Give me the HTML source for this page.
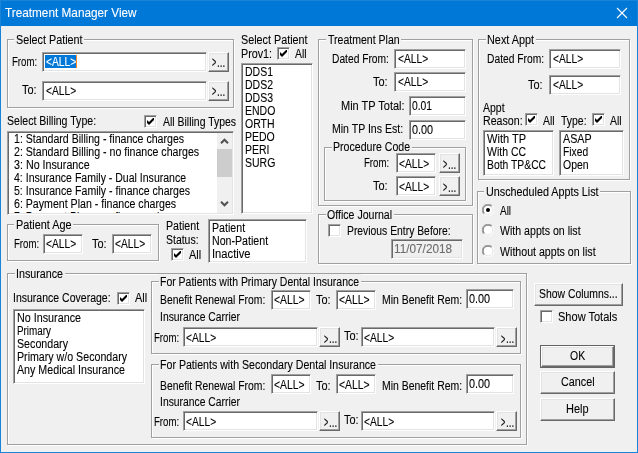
<!DOCTYPE html><html><head><meta charset="utf-8"><title>Treatment Manager View</title><style>
html,body{margin:0;padding:0;background:#f0f0f0;}
body{width:638px;height:453px;position:relative;overflow:hidden;background:#f0f0f0;font-family:"Liberation Sans",sans-serif;font-size:12.5px;color:#000;}
body>*{position:absolute;box-sizing:content-box;}
.tb{left:0;top:0;width:638px;height:26px;background:#0078d7;}
.wb{background:#1a84d8;}
.g{border:1px solid #a0a0a0;box-shadow:1px 1px 0 #fff,inset 1px 1px 0 #fff;}
.bg{background:#f0f0f0;}
.e{background:#fff;border:1px solid;border-color:#a0a0a0 #fff #fff #a0a0a0;box-shadow:inset 1px 1px 0 #696969,inset -1px -1px 0 #e3e3e3;}
.ed{background:#f0f0f0;border:1px solid;border-color:#a0a0a0 #fff #fff #a0a0a0;box-shadow:inset 1px 1px 0 #696969,inset -1px -1px 0 #e3e3e3;}
.b{background:#f0f0f0;border:1px solid;border-color:#fff #696969 #696969 #fff;box-shadow:inset -1px -1px 0 #a0a0a0,inset 1px 1px 0 #e3e3e3;}
.bd{background:#646464;}
.tx{left:0;top:0;width:638px;height:453px;will-change:transform;}
.tx>*{position:absolute;}
.t{-webkit-text-stroke:0.1px;white-space:pre;line-height:14px;height:14px;transform-origin:0 0;}
.sel{background:#0078d7;}
.sb{background:#f0f0f0;}
.th{background:#cdcdcd;}
</style></head><body>
<div class="tb"></div>
<div class="wb" style="left:0;top:0;width:1px;height:453px"></div>
<div class="wb" style="left:0;top:0;width:638px;height:1px"></div>
<div class="wb" style="left:637px;top:0;width:1px;height:453px"></div>
<div class="wb" style="left:0;top:452px;width:638px;height:1px"></div>
<svg class="a" style="left:616px;top:7px" width="12" height="12" viewBox="0 0 12 12"><path d="M1 1L11 11M11 1L1 11" stroke="#fff" stroke-width="1.1" fill="none"/></svg>
<div class="g" style="left:7px;top:39px;width:225px;height:67px"></div>
<div class="bg" style="left:14px;top:32px;width:70px;height:15px"></div>
<div class="e" style="left:42px;top:52px;width:163px;height:18px;"></div>
<div class="sel" style="left:45px;top:55px;width:31px;height:13px"></div>
<div style="left:76px;top:55px;width:1px;height:13px;background:#ff8728"></div>
<div class="b" style="left:208px;top:52px;width:19px;height:18px"></div>
<div class="e" style="left:42px;top:81px;width:163px;height:18px;"></div>
<div class="b" style="left:208px;top:81px;width:19px;height:18px"></div>
<div class="e" style="left:277px;top:47px;width:11px;height:11px;"></div>
<svg class="a" style="left:280px;top:50px" width="7" height="7" viewBox="0 0 7 7"><path d="M0 2v3l2 2l5-5v-3l-5 5z" fill="#000"/></svg>
<div class="e" style="left:241px;top:63px;width:70px;height:149px;"></div>
<div class="e" style="left:144px;top:114.5px;width:11px;height:11px;"></div>
<svg class="a" style="left:147px;top:117.5px" width="7" height="7" viewBox="0 0 7 7"><path d="M0 2v3l2 2l5-5v-3l-5 5z" fill="#000"/></svg>
<div class="e" style="left:7px;top:131px;width:225px;height:82px;"></div>
<div style="left:14px;top:211px;width:190px;height:2px;overflow:hidden"><span style="position:absolute;left:0;top:-1px;white-space:pre;line-height:14px;transform-origin:0 0;transform:scaleX(0.84)">7: Payment Plan - no finance charges</span></div>
<div class="sb" style="left:217px;top:133px;width:15px;height:80px"></div>
<div class="th" style="left:217px;top:149px;width:15px;height:28px"></div>
<svg class="a" style="left:220px;top:137px" width="9" height="8" viewBox="0 0 9 8"><path d="M1 6.2L4.5 2.7L8 6.2" stroke="#505050" stroke-width="2" fill="none"/></svg>
<svg class="a" style="left:220px;top:200px" width="9" height="8" viewBox="0 0 9 8"><path d="M1 1.8L4.5 5.3L8 1.8" stroke="#505050" stroke-width="2" fill="none"/></svg>
<div class="g" style="left:7px;top:224px;width:150px;height:35px"></div>
<div class="bg" style="left:14px;top:217px;width:59px;height:15px"></div>
<div class="e" style="left:43px;top:234px;width:38px;height:18px;"></div>
<div class="e" style="left:112px;top:234px;width:38px;height:18px;"></div>
<div class="e" style="left:171px;top:248px;width:11px;height:11px;"></div>
<svg class="a" style="left:174px;top:251px" width="7" height="7" viewBox="0 0 7 7"><path d="M0 2v3l2 2l5-5v-3l-5 5z" fill="#000"/></svg>
<div class="e" style="left:208px;top:219px;width:97px;height:42px;"></div>
<div class="g" style="left:318px;top:39px;width:153px;height:165px"></div>
<div class="bg" style="left:326px;top:32px;width:75px;height:15px"></div>
<div class="e" style="left:394px;top:49px;width:70px;height:18px;"></div>
<div class="e" style="left:394px;top:72px;width:70px;height:18px;"></div>
<div class="e" style="left:409px;top:96px;width:55px;height:18px;"></div>
<div class="e" style="left:409px;top:120px;width:55px;height:18px;"></div>
<div class="g" style="left:324px;top:147px;width:140px;height:52px"></div>
<div class="bg" style="left:331.5px;top:139.5px;width:80.5px;height:15.0px"></div>
<div class="e" style="left:396px;top:153px;width:38px;height:18px;"></div>
<div class="b" style="left:439px;top:153px;width:19px;height:18px"></div>
<div class="e" style="left:396px;top:176px;width:38px;height:18px;"></div>
<div class="b" style="left:439px;top:176px;width:19px;height:18px"></div>
<div class="g" style="left:318px;top:214px;width:153px;height:48px"></div>
<div class="bg" style="left:325.5px;top:207.5px;width:68.5px;height:15.0px"></div>
<div class="e" style="left:328px;top:224px;width:11px;height:11px;"></div>
<div class="ed" style="left:391px;top:239px;width:70px;height:18px;"></div>
<div class="g" style="left:478px;top:39px;width:150px;height:139px"></div>
<div class="bg" style="left:485.5px;top:32px;width:50.5px;height:15px"></div>
<div class="e" style="left:549px;top:49px;width:70px;height:18px;"></div>
<div class="e" style="left:549px;top:75px;width:70px;height:18px;"></div>
<div class="e" style="left:525px;top:113px;width:11px;height:11px;"></div>
<svg class="a" style="left:528px;top:116px" width="7" height="7" viewBox="0 0 7 7"><path d="M0 2v3l2 2l5-5v-3l-5 5z" fill="#000"/></svg>
<div class="e" style="left:592px;top:113px;width:11px;height:11px;"></div>
<svg class="a" style="left:595px;top:116px" width="7" height="7" viewBox="0 0 7 7"><path d="M0 2v3l2 2l5-5v-3l-5 5z" fill="#000"/></svg>
<div class="e" style="left:483px;top:130px;width:69px;height:44px;"></div>
<div class="e" style="left:559px;top:130px;width:63px;height:44px;"></div>
<div class="g" style="left:477px;top:191px;width:152px;height:71px"></div>
<div class="bg" style="left:484px;top:184.5px;width:116px;height:15.0px"></div>
<svg class="a" style="left:482px;top:204px" width="12" height="12" viewBox="0 0 12 12"><circle cx="6" cy="6" r="5.5" fill="#fff"/><path d="M10.2 1.8A5.9 5.9 0 0 0 1.8 10.2" fill="none" stroke="#a0a0a0" stroke-width="1"/><path d="M9.5 2.5A4.9 4.9 0 0 0 2.5 9.5" fill="none" stroke="#696969" stroke-width="1"/><path d="M10.2 1.8A5.9 5.9 0 0 1 1.8 10.2" fill="none" stroke="#fff" stroke-width="1"/><path d="M9.5 2.5A4.9 4.9 0 0 1 2.5 9.5" fill="none" stroke="#e3e3e3" stroke-width="1"/><circle cx="6" cy="6" r="2" fill="#000"/></svg>
<svg class="a" style="left:482px;top:224px" width="12" height="12" viewBox="0 0 12 12"><circle cx="6" cy="6" r="5.5" fill="#fff"/><path d="M10.2 1.8A5.9 5.9 0 0 0 1.8 10.2" fill="none" stroke="#a0a0a0" stroke-width="1"/><path d="M9.5 2.5A4.9 4.9 0 0 0 2.5 9.5" fill="none" stroke="#696969" stroke-width="1"/><path d="M10.2 1.8A5.9 5.9 0 0 1 1.8 10.2" fill="none" stroke="#fff" stroke-width="1"/><path d="M9.5 2.5A4.9 4.9 0 0 1 2.5 9.5" fill="none" stroke="#e3e3e3" stroke-width="1"/></svg>
<svg class="a" style="left:482px;top:245px" width="12" height="12" viewBox="0 0 12 12"><circle cx="6" cy="6" r="5.5" fill="#fff"/><path d="M10.2 1.8A5.9 5.9 0 0 0 1.8 10.2" fill="none" stroke="#a0a0a0" stroke-width="1"/><path d="M9.5 2.5A4.9 4.9 0 0 0 2.5 9.5" fill="none" stroke="#696969" stroke-width="1"/><path d="M10.2 1.8A5.9 5.9 0 0 1 1.8 10.2" fill="none" stroke="#fff" stroke-width="1"/><path d="M9.5 2.5A4.9 4.9 0 0 1 2.5 9.5" fill="none" stroke="#e3e3e3" stroke-width="1"/></svg>
<div class="g" style="left:7px;top:273px;width:518px;height:170px"></div>
<div class="bg" style="left:14.600000000000001px;top:266px;width:50.4px;height:15px"></div>
<div class="e" style="left:117px;top:292px;width:11px;height:11px;"></div>
<svg class="a" style="left:120px;top:295px" width="7" height="7" viewBox="0 0 7 7"><path d="M0 2v3l2 2l5-5v-3l-5 5z" fill="#000"/></svg>
<div class="e" style="left:13px;top:309px;width:130px;height:73px;"></div>
<div class="g" style="left:151px;top:281px;width:368px;height:71px"></div>
<div class="bg" style="left:158.8px;top:274px;width:202.40000000000003px;height:15px"></div>
<div class="e" style="left:271px;top:290px;width:38px;height:18px;"></div>
<div class="e" style="left:336px;top:290px;width:38px;height:18px;"></div>
<div class="e" style="left:466px;top:289px;width:46px;height:18px;"></div>
<div class="e" style="left:183px;top:327px;width:133px;height:18px;"></div>
<div class="b" style="left:319px;top:327px;width:19px;height:18px"></div>
<div class="e" style="left:361px;top:327px;width:132px;height:18px;"></div>
<div class="b" style="left:496px;top:327px;width:19px;height:18px"></div>
<div class="g" style="left:151px;top:364px;width:368px;height:72px"></div>
<div class="bg" style="left:158.8px;top:357px;width:219.40000000000003px;height:15px"></div>
<div class="e" style="left:271px;top:374px;width:38px;height:18px;"></div>
<div class="e" style="left:336px;top:374px;width:38px;height:18px;"></div>
<div class="e" style="left:466px;top:374px;width:46px;height:18px;"></div>
<div class="e" style="left:183px;top:411px;width:133px;height:18px;"></div>
<div class="b" style="left:319px;top:411px;width:19px;height:18px"></div>
<div class="e" style="left:361px;top:411px;width:132px;height:18px;"></div>
<div class="b" style="left:496px;top:411px;width:19px;height:18px"></div>
<div class="b" style="left:534px;top:283px;width:87px;height:21px"></div>
<div class="e" style="left:540px;top:310px;width:11px;height:11px;"></div>
<div class="bd" style="left:540px;top:345px;width:75px;height:23px"></div>
<div class="b" style="left:541px;top:346px;width:71px;height:19px"></div>
<div class="b" style="left:540px;top:371px;width:73px;height:21px"></div>
<div class="b" style="left:540px;top:398px;width:73px;height:21px"></div>
<div class="tx">
<span class="t" style="left:4.60px;top:5.50px;transform:scaleX(0.9061);font-size:13px;color:#fff;">Treatment Manager View</span>
<span class="t" style="left:15.60px;top:32.62px;transform:scaleX(0.8634);">Select Patient</span>
<span class="t" style="left:12.10px;top:54.62px;transform:scaleX(0.7690);">From:</span>
<span class="t" style="left:45.60px;top:54.62px;transform:scaleX(0.8170);color:#fff;">&lt;ALL&gt;</span>
<span class="t" style="left:212.10px;top:55.47px;transform:scaleX(0.5130);font-size:14px;">&gt;</span>
<span class="t" style="left:217.30px;top:55.72px;transform:scaleX(0.7868);">...</span>
<span class="t" style="left:21.60px;top:82.62px;transform:scaleX(0.8749);">To:</span>
<span class="t" style="left:45.60px;top:83.62px;transform:scaleX(0.8170);">&lt;ALL&gt;</span>
<span class="t" style="left:212.10px;top:84.47px;transform:scaleX(0.5130);font-size:14px;">&gt;</span>
<span class="t" style="left:217.30px;top:84.72px;transform:scaleX(0.7868);">...</span>
<span class="t" style="left:240.60px;top:32.62px;transform:scaleX(0.8634);">Select Patient</span>
<span class="t" style="left:240.60px;top:46.62px;transform:scaleX(0.8605);">Prov1:</span>
<span class="t" style="left:295.00px;top:46.62px;transform:scaleX(0.8342);">All</span>
<span class="t" style="left:244.60px;top:65.12px;transform:scaleX(0.8400);">DDS1</span>
<span class="t" style="left:244.60px;top:78.12px;transform:scaleX(0.8400);">DDS2</span>
<span class="t" style="left:244.60px;top:91.12px;transform:scaleX(0.8400);">DDS3</span>
<span class="t" style="left:244.60px;top:104.12px;transform:scaleX(0.8400);">ENDO</span>
<span class="t" style="left:244.60px;top:117.12px;transform:scaleX(0.8400);">ORTH</span>
<span class="t" style="left:244.60px;top:130.12px;transform:scaleX(0.8400);">PEDO</span>
<span class="t" style="left:244.60px;top:143.12px;transform:scaleX(0.8400);">PERI</span>
<span class="t" style="left:244.60px;top:156.12px;transform:scaleX(0.8400);">SURG</span>
<span class="t" style="left:7.10px;top:113.62px;transform:scaleX(0.8454);">Select Billing Type:</span>
<span class="t" style="left:162.60px;top:114.62px;transform:scaleX(0.8372);">All Billing Types</span>
<span class="t" style="left:14.10px;top:131.62px;transform:scaleX(0.8471);">1: Standard Billing - finance charges</span>
<span class="t" style="left:14.10px;top:144.62px;transform:scaleX(0.8483);">2: Standard Billing - no finance charges</span>
<span class="t" style="left:14.10px;top:157.62px;transform:scaleX(0.8567);">3: No Insurance</span>
<span class="t" style="left:14.10px;top:170.62px;transform:scaleX(0.8425);">4: Insurance Family - Dual Insurance</span>
<span class="t" style="left:14.10px;top:183.62px;transform:scaleX(0.8449);">5: Insurance Family - finance charges</span>
<span class="t" style="left:14.10px;top:196.62px;transform:scaleX(0.8483);">6: Payment Plan - finance charges</span>
<span class="t" style="left:15.60px;top:217.62px;transform:scaleX(0.8694);">Patient Age</span>
<span class="t" style="left:13.60px;top:236.62px;transform:scaleX(0.7690);">From:</span>
<span class="t" style="left:46.10px;top:236.62px;transform:scaleX(0.8170);">&lt;ALL&gt;</span>
<span class="t" style="left:91.60px;top:236.62px;transform:scaleX(0.8749);">To:</span>
<span class="t" style="left:115.10px;top:236.62px;transform:scaleX(0.8170);">&lt;ALL&gt;</span>
<span class="t" style="left:166.10px;top:219.12px;transform:scaleX(0.8504);">Patient</span>
<span class="t" style="left:166.10px;top:232.62px;transform:scaleX(0.8376);">Status:</span>
<span class="t" style="left:188.60px;top:247.62px;transform:scaleX(0.8701);">All</span>
<span class="t" style="left:212.10px;top:220.62px;transform:scaleX(0.8504);">Patient</span>
<span class="t" style="left:212.10px;top:233.62px;transform:scaleX(0.8498);">Non-Patient</span>
<span class="t" style="left:212.10px;top:246.62px;transform:scaleX(0.8957);">Inactive</span>
<span class="t" style="left:327.60px;top:32.62px;transform:scaleX(0.8424);">Treatment Plan</span>
<span class="t" style="left:332.30px;top:51.62px;transform:scaleX(0.8191);">Dated From:</span>
<span class="t" style="left:397.60px;top:51.62px;transform:scaleX(0.8170);">&lt;ALL&gt;</span>
<span class="t" style="left:372.60px;top:74.62px;transform:scaleX(0.8749);">To:</span>
<span class="t" style="left:397.60px;top:74.62px;transform:scaleX(0.8170);">&lt;ALL&gt;</span>
<span class="t" style="left:340.60px;top:98.62px;transform:scaleX(0.8801);">Min TP Total:</span>
<span class="t" style="left:412.10px;top:98.92px;transform:scaleX(0.8257);">0.01</span>
<span class="t" style="left:332.10px;top:121.62px;transform:scaleX(0.8434);">Min TP Ins Est:</span>
<span class="t" style="left:412.10px;top:122.62px;transform:scaleX(0.8668);">0.00</span>
<span class="t" style="left:333.10px;top:140.12px;transform:scaleX(0.8470);">Procedure Code</span>
<span class="t" style="left:364.10px;top:155.62px;transform:scaleX(0.7690);">From:</span>
<span class="t" style="left:399.10px;top:156.62px;transform:scaleX(0.8170);">&lt;ALL&gt;</span>
<span class="t" style="left:443.10px;top:157.47px;transform:scaleX(0.5130);font-size:14px;">&gt;</span>
<span class="t" style="left:448.30px;top:157.72px;transform:scaleX(0.7868);">...</span>
<span class="t" style="left:372.60px;top:178.62px;transform:scaleX(0.8749);">To:</span>
<span class="t" style="left:399.10px;top:179.62px;transform:scaleX(0.8170);">&lt;ALL&gt;</span>
<span class="t" style="left:443.10px;top:180.47px;transform:scaleX(0.5130);font-size:14px;">&gt;</span>
<span class="t" style="left:448.30px;top:180.72px;transform:scaleX(0.7868);">...</span>
<span class="t" style="left:327.10px;top:208.12px;transform:scaleX(0.8465);">Office Journal</span>
<span class="t" style="left:346.60px;top:223.62px;transform:scaleX(0.8284);">Previous Entry Before:</span>
<span class="t" style="left:394.10px;top:241.62px;transform:scaleX(0.9426);color:#6d6d6d;">11/07/2018</span>
<span class="t" style="left:487.10px;top:32.62px;transform:scaleX(0.8690);">Next Appt</span>
<span class="t" style="left:486.60px;top:51.62px;transform:scaleX(0.8220);">Dated From:</span>
<span class="t" style="left:552.60px;top:51.62px;transform:scaleX(0.8170);">&lt;ALL&gt;</span>
<span class="t" style="left:527.60px;top:77.62px;transform:scaleX(0.8749);">To:</span>
<span class="t" style="left:552.60px;top:77.62px;transform:scaleX(0.8170);">&lt;ALL&gt;</span>
<span class="t" style="left:482.60px;top:100.92px;transform:scaleX(0.8399);">Appt</span>
<span class="t" style="left:482.60px;top:113.62px;transform:scaleX(0.8505);">Reason:</span>
<span class="t" style="left:542.60px;top:113.62px;transform:scaleX(0.8342);">All</span>
<span class="t" style="left:561.10px;top:113.62px;transform:scaleX(0.8372);">Type:</span>
<span class="t" style="left:609.60px;top:113.62px;transform:scaleX(0.8342);">All</span>
<span class="t" style="left:486.60px;top:132.12px;transform:scaleX(0.8839);">With TP</span>
<span class="t" style="left:486.60px;top:145.12px;transform:scaleX(0.8403);">With CC</span>
<span class="t" style="left:486.60px;top:158.12px;transform:scaleX(0.8286);">Both TP&amp;CC</span>
<span class="t" style="left:563.40px;top:132.12px;transform:scaleX(0.8573);">ASAP</span>
<span class="t" style="left:563.40px;top:145.12px;transform:scaleX(0.8208);">Fixed</span>
<span class="t" style="left:563.40px;top:158.12px;transform:scaleX(0.8368);">Open</span>
<span class="t" style="left:485.60px;top:185.12px;transform:scaleX(0.8619);">Unscheduled Appts List</span>
<span class="t" style="left:499.60px;top:203.62px;transform:scaleX(0.7982);">All</span>
<span class="t" style="left:499.60px;top:223.62px;transform:scaleX(0.8467);">With appts on list</span>
<span class="t" style="left:499.60px;top:244.62px;transform:scaleX(0.8493);">Without appts on list</span>
<span class="t" style="left:16.20px;top:266.62px;transform:scaleX(0.8560);">Insurance</span>
<span class="t" style="left:13.10px;top:290.62px;transform:scaleX(0.8410);">Insurance Coverage:</span>
<span class="t" style="left:134.60px;top:291.12px;transform:scaleX(0.8701);">All</span>
<span class="t" style="left:17.40px;top:310.92px;transform:scaleX(0.8607);">No Insurance</span>
<span class="t" style="left:17.40px;top:323.92px;transform:scaleX(0.7896);">Primary</span>
<span class="t" style="left:17.40px;top:336.92px;transform:scaleX(0.8533);">Secondary</span>
<span class="t" style="left:17.40px;top:349.92px;transform:scaleX(0.8513);">Primary w/o Secondary</span>
<span class="t" style="left:17.40px;top:362.92px;transform:scaleX(0.8541);">Any Medical Insurance</span>
<span class="t" style="left:160.40px;top:274.62px;transform:scaleX(0.8376);">For Patients with Primary Dental Insurance</span>
<span class="t" style="left:160.40px;top:292.62px;transform:scaleX(0.8282);">Benefit Renewal From:</span>
<span class="t" style="left:274.10px;top:292.92px;transform:scaleX(0.8305);">&lt;ALL&gt;</span>
<span class="t" style="left:315.60px;top:292.62px;transform:scaleX(0.8749);">To:</span>
<span class="t" style="left:339.10px;top:292.92px;transform:scaleX(0.8305);">&lt;ALL&gt;</span>
<span class="t" style="left:382.10px;top:292.62px;transform:scaleX(0.8355);">Min Benefit Rem:</span>
<span class="t" style="left:469.10px;top:291.62px;transform:scaleX(0.8668);">0.00</span>
<span class="t" style="left:160.40px;top:310.12px;transform:scaleX(0.8283);">Insurance Carrier</span>
<span class="t" style="left:154.10px;top:330.62px;transform:scaleX(0.7690);">From:</span>
<span class="t" style="left:186.10px;top:331.12px;transform:scaleX(0.8170);">&lt;ALL&gt;</span>
<span class="t" style="left:323.60px;top:331.97px;transform:scaleX(0.5130);font-size:14px;">&gt;</span>
<span class="t" style="left:328.80px;top:332.22px;transform:scaleX(0.7868);">...</span>
<span class="t" style="left:343.60px;top:328.62px;transform:scaleX(0.8749);">To:</span>
<span class="t" style="left:364.10px;top:331.12px;transform:scaleX(0.8170);">&lt;ALL&gt;</span>
<span class="t" style="left:500.60px;top:331.97px;transform:scaleX(0.5130);font-size:14px;">&gt;</span>
<span class="t" style="left:505.80px;top:332.22px;transform:scaleX(0.7868);">...</span>
<span class="t" style="left:160.40px;top:357.62px;transform:scaleX(0.8494);">For Patients with Secondary Dental Insurance</span>
<span class="t" style="left:160.40px;top:378.62px;transform:scaleX(0.8282);">Benefit Renewal From:</span>
<span class="t" style="left:274.10px;top:377.82px;transform:scaleX(0.8305);">&lt;ALL&gt;</span>
<span class="t" style="left:315.60px;top:378.62px;transform:scaleX(0.8749);">To:</span>
<span class="t" style="left:339.10px;top:377.82px;transform:scaleX(0.8305);">&lt;ALL&gt;</span>
<span class="t" style="left:382.10px;top:378.62px;transform:scaleX(0.8355);">Min Benefit Rem:</span>
<span class="t" style="left:469.10px;top:376.62px;transform:scaleX(0.8668);">0.00</span>
<span class="t" style="left:160.40px;top:395.12px;transform:scaleX(0.8283);">Insurance Carrier</span>
<span class="t" style="left:154.10px;top:415.32px;transform:scaleX(0.7690);">From:</span>
<span class="t" style="left:186.10px;top:414.62px;transform:scaleX(0.8170);">&lt;ALL&gt;</span>
<span class="t" style="left:323.60px;top:415.47px;transform:scaleX(0.5130);font-size:14px;">&gt;</span>
<span class="t" style="left:328.80px;top:415.72px;transform:scaleX(0.7868);">...</span>
<span class="t" style="left:343.60px;top:413.32px;transform:scaleX(0.8749);">To:</span>
<span class="t" style="left:364.10px;top:414.62px;transform:scaleX(0.8170);">&lt;ALL&gt;</span>
<span class="t" style="left:500.60px;top:415.47px;transform:scaleX(0.5130);font-size:14px;">&gt;</span>
<span class="t" style="left:505.80px;top:415.72px;transform:scaleX(0.7868);">...</span>
<span class="t" style="left:538.60px;top:286.62px;transform:scaleX(0.8319);">Show Columns...</span>
<span class="t" style="left:557.90px;top:310.12px;transform:scaleX(0.8828);">Show Totals</span>
<span class="t" style="left:570.10px;top:348.62px;transform:scaleX(0.8360);">OK</span>
<span class="t" style="left:560.60px;top:374.62px;transform:scaleX(0.8633);">Cancel</span>
<span class="t" style="left:565.60px;top:401.62px;transform:scaleX(0.8787);">Help</span>
</div></body></html>
